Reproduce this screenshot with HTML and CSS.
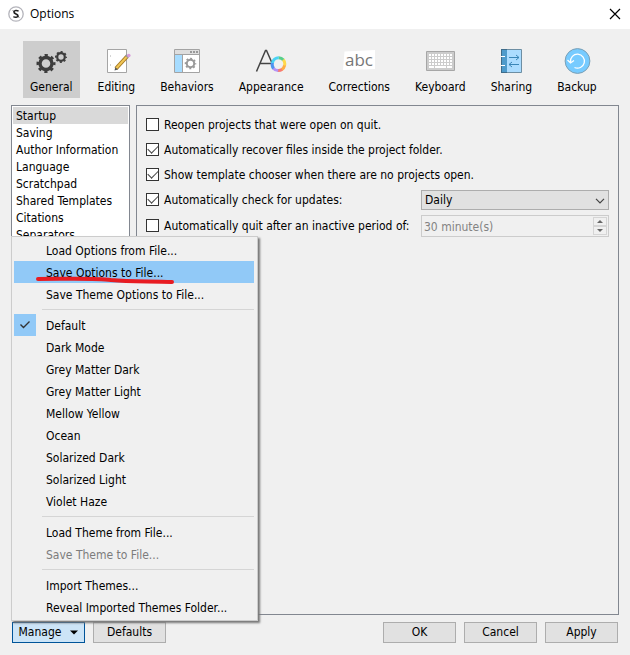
FILE: index.html
```html
<!DOCTYPE html>
<html lang="en">
<head>
<meta charset="utf-8">
<title>Options</title>
<link rel="stylesheet" href="styles.css">
</head>
<body>
<div class="window">
  <header class="titlebar">
    <svg class="app-icon" width="16" height="16" viewBox="0 0 16 16" aria-hidden="true">
      <circle cx="8" cy="8" r="7.2" fill="#fff" stroke="#b4b4bb" stroke-width="1.3"/>
      <path d="M10.600 5.200C9 4.300 6 4.200 6 6.200c0 2 4 1.600 4 3.600 0 1.600-3 1.800-4.600.8" fill="none" stroke="#222" stroke-width="1.500"/>
      <path d="M5 4.500l6 7" stroke="#222" stroke-width="1"/>
    </svg>
    <h1>Options</h1>
    <button class="close" type="button" aria-label="Close">
      <svg width="12" height="12" viewBox="0 0 12 12"><path d="M1 1l10 10M11 1L1 11" stroke="#000" stroke-width="1.2"/></svg>
    </button>
  </header>

  <nav class="tabs">
    <button class="tab active" type="button">
      <svg width="32" height="32" viewBox="0 0 32 32">
        <circle cx="11" cy="18.500" r="6" fill="none" stroke="#3c3c3c" stroke-width="3.400"/>
        <circle cx="11" cy="18.500" r="8.300" fill="none" stroke="#3c3c3c" stroke-width="2.400" stroke-dasharray="3.259 3.259" stroke-dashoffset="1.630"/>
        <circle cx="26" cy="12" r="3.800" fill="none" stroke="#3c3c3c" stroke-width="2.200"/>
        <circle cx="26" cy="12" r="5.200" fill="none" stroke="#3c3c3c" stroke-width="1.600" stroke-dasharray="2.042 2.042" stroke-dashoffset="1.021"/>
      </svg>
      <span>General</span>
    </button>
    <button class="tab" type="button">
      <svg width="32" height="32" viewBox="0 0 32 32">
        <path d="M7.500 4.500h19v23h-19z" fill="#fff" stroke="#a5a5a5"/>
        <path d="M10 11h1M10 20h1" stroke="#aaa"/>
        <path d="M16 23.500L27 11.500" stroke="#a57a24" stroke-width="4"/>
        <path d="M16 23.500L27 11.500" stroke="#f1c655" stroke-width="2"/>
        <path d="M14.500 25.500l.8-3.300 2.600 2.300z" fill="#555"/>
        <path d="M26.500 12l1.500-1.700" stroke="#999" stroke-width="4"/>
        <circle cx="28.800" cy="10.500" r="1.800" fill="#d79adb"/>
      </svg>
      <span>Editing</span>
    </button>
    <button class="tab" type="button">
      <svg width="32" height="32" viewBox="0 0 32 32">
        <path d="M3.500 4.500h25v23h-25z" fill="#fff" stroke="#a3a3a3"/>
        <path d="M4 5h24v4H4z" fill="#dedede"/>
        <path d="M4 9h7v18H4z" fill="#a6dcff"/>
        <path d="M11.500 9v18M4 9.500h24" stroke="#a3a3a3"/>
        <path d="M19 7h2M22 7h2M25 7h2" stroke="#999" stroke-width="2"/>
        <circle cx="19.500" cy="18.500" r="3.700" fill="none" stroke="#999" stroke-width="2"/>
        <circle cx="19.500" cy="18.500" r="5" fill="none" stroke="#999" stroke-width="1.600" stroke-dasharray="1.963 1.963" stroke-dashoffset=".980"/>
      </svg>
      <span>Behaviors</span>
    </button>
    <button class="tab" type="button">
      <svg width="32" height="32" viewBox="0 0 32 32">
        <path d="M1.500 26.500L10.500 5.500h1L17 18M5.500 18.500H16" fill="none" stroke="#444" stroke-width="1.500"/>
        <g fill="none" stroke-width="3">
          <path d="M23.500 12.700a6.500 6.500 0 0 1 5 2.200" stroke="#58cf8b"/>
          <path d="M28.300 14.700a6.500 6.500 0 0 1 1.200 6" stroke="#ffd84a"/>
          <path d="M29.600 20.400a6.500 6.500 0 0 1-3 4.300" stroke="#ffad45"/>
          <path d="M27 24.500a6.500 6.500 0 0 1-4.500 1" stroke="#f87b72"/>
          <path d="M23.200 25.600a6.500 6.500 0 0 1-5-2.500" stroke="#b693f4"/>
          <path d="M18.500 23.500a6.500 6.500 0 0 1-1-6" stroke="#5093ef"/>
          <path d="M17.400 18a6.500 6.500 0 0 1 6.300-5.300" stroke="#4bd3f5"/>
        </g>
      </svg>
      <span>Appearance</span>
    </button>
    <button class="tab" type="button">
      <svg width="32" height="32" viewBox="0 0 32 32">
        <path d="M1.500 6.500L32 5v19L0 25z" fill="#fff"/>
        <text class="abc" x="16" y="21" text-anchor="middle">abc</text>
      </svg>
      <span>Corrections</span>
    </button>
    <button class="tab" type="button">
      <svg width="32" height="32" viewBox="0 0 32 32">
        <path d="M2.500 6.500h28v19h-28z" fill="#ccc" stroke="#a6a6a6"/>
        <g stroke="#fff" stroke-width="2">
          <path d="M5 10h23M5 13h23M5 16h23M5 19h23" stroke-dasharray="2 1"/>
          <path d="M5 22h5M11 22h11M23 22h5"/>
        </g>
      </svg>
      <span>Keyboard</span>
    </button>
    <button class="tab" type="button">
      <svg width="32" height="32" viewBox="0 0 32 32">
        <path d="M6.500 4.500h20v23h-20z" fill="#abdcff" stroke="#6d8ea3"/>
        <path d="M6 4h6v24H6z" fill="#4e9bcb"/>
        <path d="M6.500 4v24M6 4.500h6M6 27.500h6" stroke="#3e6c8a"/>
        <path d="M6 11.500h4M6 20.500h4" stroke="#fff"/>
        <path d="M14 12.500h10M21 10l3 2.500-3 2.500M24 19.500H14M17 17l-3 2.500 3 2.500" fill="none" stroke="#3a86b8"/>
      </svg>
      <span>Sharing</span>
    </button>
    <button class="tab" type="button">
      <svg width="32" height="32" viewBox="0 0 32 32">
        <circle cx="16.500" cy="16" r="12.400" fill="#77cbff" stroke="#7a9fb5"/>
        <path d="M9.500 17a7 7 0 1 1 4 5.500M6.500 15l3 3 3.500-2.500" fill="none" stroke="#fff" stroke-width="1.300"/>
      </svg>
      <span>Backup</span>
    </button>
  </nav>

  <main class="content">
    <ul class="sections">
      <li class="selected">Startup</li>
      <li>Saving</li>
      <li>Author Information</li>
      <li>Language</li>
      <li>Scratchpad</li>
      <li>Shared Templates</li>
      <li>Citations</li>
      <li>Separators</li>
    </ul>
    <form class="panel">
      <div class="row"><label><input type="checkbox"><span>Reopen projects that were open on quit.</span></label></div>
      <div class="row"><label><input type="checkbox" checked><span>Automatically recover files inside the project folder.</span></label></div>
      <div class="row"><label><input type="checkbox" checked><span>Show template chooser when there are no projects open.</span></label></div>
      <div class="row">
        <label><input type="checkbox" checked><span>Automatically check for updates:</span></label>
        <div class="field">
          <select aria-label="Update interval"><option>Daily</option></select>
          <svg class="chevron" width="10" height="6" viewBox="0 0 10 6" aria-hidden="true"><path d="M1 .8l4 4 4-4" fill="none" stroke="#444" stroke-width="1.200"/></svg>
        </div>
      </div>
      <div class="row last">
        <label><input type="checkbox"><span>Automatically quit after an inactive period of:</span></label>
        <div class="field spin">
          <input type="text" value="30 minute(s)" aria-label="Inactive period" disabled>
          <div class="steps">
            <button type="button" aria-label="Increase" disabled><svg width="6" height="3" viewBox="0 0 6 3"><path d="M0 3l3-3 3 3z" fill="#666"/></svg></button>
            <button type="button" aria-label="Decrease" disabled><svg width="6" height="3" viewBox="0 0 6 3"><path d="M0 0l3 3 3-3z" fill="#666"/></svg></button>
          </div>
        </div>
      </div>
    </form>
  </main>

  <footer class="footer">
    <div class="manage">
      <button class="btn open" type="button" aria-haspopup="menu" aria-expanded="true">Manage
        <svg width="8" height="5" viewBox="0 0 8 5"><path d="M0 .5h8L4 4.500z" fill="#000"/></svg>
      </button>
      <div class="menu" role="menu">
        <button type="button" role="menuitem">Load Options from File...</button>
        <button type="button" role="menuitem" class="hover">Save Options to File...
          <svg class="underline" width="140" height="10" viewBox="0 0 140 10" aria-hidden="true"><path d="M2 4C30 4 60 3 75 5c20 2 40 1 61 2" fill="none" stroke="#e81c22" stroke-width="4" stroke-linecap="round"/></svg>
        </button>
        <button type="button" role="menuitem">Save Theme Options to File...</button>
        <hr>
        <button type="button" role="menuitemradio" aria-checked="true"><span class="check"><svg width="12" height="10" viewBox="0 0 12 10"><path d="M1.500 4.500l3 3 6-6" fill="none" stroke="#333" stroke-width="1.400"/></svg></span>Default</button>
        <button type="button" role="menuitemradio">Dark Mode</button>
        <button type="button" role="menuitemradio">Grey Matter Dark</button>
        <button type="button" role="menuitemradio">Grey Matter Light</button>
        <button type="button" role="menuitemradio">Mellow Yellow</button>
        <button type="button" role="menuitemradio">Ocean</button>
        <button type="button" role="menuitemradio">Solarized Dark</button>
        <button type="button" role="menuitemradio">Solarized Light</button>
        <button type="button" role="menuitemradio">Violet Haze</button>
        <hr>
        <button type="button" role="menuitem">Load Theme from File...</button>
        <button type="button" role="menuitem" disabled>Save Theme to File...</button>
        <hr>
        <button type="button" role="menuitem">Import Themes...</button>
        <button type="button" role="menuitem">Reveal Imported Themes Folder...</button>
      </div>
    </div>
    <button class="btn" type="button">Defaults</button>
    <span class="spacer"></span>
    <button class="btn" type="button">OK</button>
    <button class="btn" type="button">Cancel</button>
    <button class="btn" type="button">Apply</button>
  </footer>
</div>
</body>
</html>
```
FILE: styles.css
```css
* { box-sizing: border-box; }

body {
  margin: 0;
  background: #f0f0f0;
  color: #000;
  font: 12px/17px "DejaVu Sans Condensed", "Noto Sans", sans-serif;
}

button, input, select { font: inherit; color: inherit; }
button { margin: 0; padding: 0; border: 0; background: none; }
svg { display: block; flex: none; }

.window { display: flex; flex-direction: column; min-height: 100vh; }

.titlebar {
  display: flex;
  align-items: center;
  gap: 6px;
  height: 29px;
  padding: 0 9px 2px 8px;
  background: #fff;
}
.titlebar h1 { flex: 1; margin: 0; font: 12px/16px "Open Sans", sans-serif; }

.tabs { display: flex; gap: 11px; padding: 12px 23px 7px; }
.tab {
  display: flex;
  flex-direction: column;
  align-items: center;
  gap: 2px;
  height: 57px;
  padding: 4px 7px 1px;
}
.tab.active { background: #cdcdcd; }
.abc { font: 17px "Open Sans", sans-serif; fill: #777; }

.content { flex: 1; display: flex; gap: 6px; padding: 0 11px; }
.sections {
  flex: none;
  width: 119px;
  margin: 0;
  padding: 1px;
  border: 1px solid #828790;
  background: #fff;
  list-style: none;
}
.sections li { height: 17px; padding: 0 3px; line-height: 19px; white-space: nowrap; }
.sections .selected { background: #d9d9d9; }

.panel { flex: 1; padding: 6px 9px; border: 1px solid #828790; }
.row { display: flex; align-items: center; justify-content: space-between; height: 25px; }
.row.last { margin-top: 1px; }
.row label { display: flex; align-items: center; gap: 5px; white-space: nowrap; }
.row label span { padding-top: 2px; }
.row input[type="checkbox"] {
  appearance: none;
  display: grid;
  place-items: center;
  width: 13px;
  height: 13px;
  margin: 0;
  border: 1px solid #333;
  background: #fff;
}
.row input[type="checkbox"]:checked::before {
  content: "";
  width: 9px;
  height: 5px;
  margin-bottom: 3px;
  border: solid #444;
  border-width: 0 0 1px 1px;
  transform: rotate(-45deg);
}

.field { position: relative; width: 188px; }
.field select {
  appearance: none;
  display: block;
  width: 100%;
  height: 20px;
  padding: 1px 3px 0;
  border: 1px solid #adadad;
  border-radius: 0;
  background: #e1e1e1;
}
.chevron { position: absolute; right: 4px; top: 8px; }
.spin {
  display: flex;
  height: 22px;
  padding: 1px;
  border: 1px solid #ccc;
}
.spin input { flex: 1; min-width: 0; padding: 3px 1px 0; border: 0; background: none; color: #838383; }
.steps { display: flex; flex-direction: column; width: 14px; }
.steps button { flex: 1; display: grid; place-items: center; border: 1px solid #d5d5d5; }

.footer { display: flex; gap: 8px; padding: 7px 12px 12px; }
.spacer { flex: 1; }
.btn {
  display: flex;
  align-items: center;
  justify-content: center;
  gap: 9px;
  width: 73px;
  height: 21px;
  border: 1px solid #adadad;
  background: #e1e1e1;
}
.btn.open { border-color: #005499; background: #cce4f7; }

.manage { position: relative; }
.menu {
  position: absolute;
  left: -1px;
  bottom: calc(100% + 1px);
  width: 247px;
  padding: 2px 3px 2px 2px;
  border: 1px solid #ccc;
  background: #f0f0f0;
  box-shadow: 2px 2px 2px #777;
}
.menu button {
  position: relative;
  display: block;
  width: 100%;
  height: 22px;
  padding: 2px 32px 0;
  text-align: left;
  white-space: nowrap;
}
.menu .hover { background: #91c9f7; }
.menu button:disabled { color: #7c7c7c; }
.menu hr { margin: 4px 0 4px 28px; border: 0; border-top: 1px solid #d5d5d5; }
.check {
  position: absolute;
  left: 0;
  top: 0;
  display: grid;
  place-items: center;
  width: 22px;
  height: 22px;
  background: #91c9f7;
}
.underline { position: absolute; left: 22px; top: 14px; z-index: 1; }
```
